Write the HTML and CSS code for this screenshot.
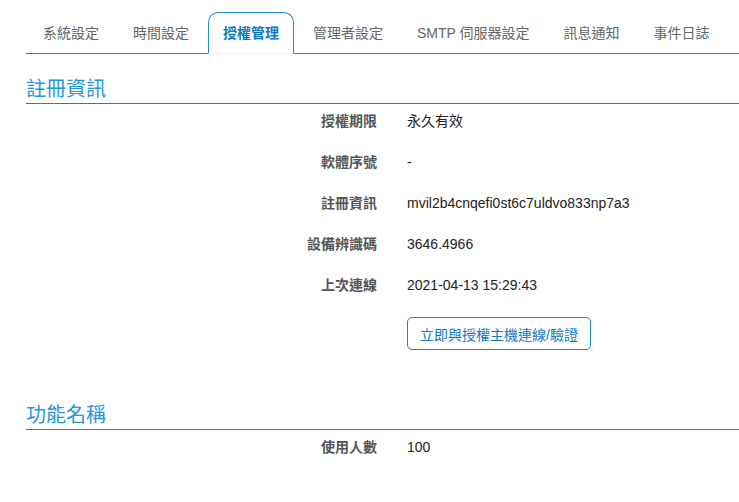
FILE: index.html
```html
<!doctype html>
<html lang="zh-Hant">

<head>
    <meta charset="utf-8">
    <meta name="viewport" content="width=device-width, initial-scale=1">
    <title>授權管理</title>

    <link rel="stylesheet" href="styles.css">

</head>

<body>
    <div class="page">
        <ul class="tabs">
            <li class="tab">系統設定</li>
            <li class="tab">時間設定</li>
            <li class="tab active">授權管理</li>
            <li class="tab">管理者設定</li>
            <li class="tab">SMTP 伺服器設定</li>
            <li class="tab">訊息通知</li>
            <li class="tab">事件日誌</li>
        </ul>

        <h2 class="section-title first">註冊資訊</h2>
        <div class="row">
            <div class="label">授權期限</div>
            <div class="value">永久有效</div>
        </div>
        <div class="row">
            <div class="label">軟體序號</div>
            <div class="value">-</div>
        </div>
        <div class="row">
            <div class="label">註冊資訊</div>
            <div class="value">mvil2b4cnqefi0st6c7uldvo833np7a3</div>
        </div>
        <div class="row">
            <div class="label">設備辨識碼</div>
            <div class="value">3646.4966</div>
        </div>
        <div class="row">
            <div class="label">上次連線</div>
            <div class="value">2021-04-13 15:29:43</div>
        </div>
        <div class="actions">
            <button class="btn">立即與授權主機連線/驗證</button>
        </div>

        <h2 class="section-title second">功能名稱</h2>
        <div class="row">
            <div class="label">使用人數</div>
            <div class="value">100</div>
        </div>
    </div>
</body>

</html>
```

FILE: styles.css
```css
body {
    margin: 0;
    background-color: #fff;
    color: #333;
    font-family: "Liberation Sans", Arial, "Noto Sans CJK TC", sans-serif;
    font-size: 14px;
}

.page {
    padding: 12px 0 0 26px;
}

.tabs {
    display: flex;
    margin: 0;
    padding: 0;
    list-style: none;
    border-bottom: 1px solid #1b7fc4;
}

.tab {
    margin: 0 2px -1px;
    padding: 0 14px;
    line-height: 40px;
    color: #666;
    border: 1px solid transparent;
    border-bottom: 1px solid #1b7fc4;
    border-radius: 10px 10px 0 0;
}

.tab.active {
    color: #0b78c4;
    font-weight: bold;
    border-color: #1b8ad0;
    border-bottom-color: #e6f1fa;
    background-color: #fff;
}

.section-title {
    margin: 0;
    padding-bottom: 2px;
    font-size: 20px;
    line-height: 24px;
    font-weight: normal;
    color: #2595dc;
    border-bottom: 1px solid #1b7fc4;
}

.section-title.first {
    margin-top: 23px;
}

.section-title.second {
    margin-top: 53px;
}

.row {
    display: flex;
    padding: 7px 0 14px;
    line-height: 20px;
}

.label {
    width: 351px;
    padding-right: 30px;
    text-align: right;
    font-weight: bold;
    color: #555;
}

.value {
    color: #222;
}

.actions {
    padding: 8px 0 0 381px;
}

.btn {
    height: 33px;
    padding: 0 12px;
    font-family: inherit;
    font-size: 14px;
    color: #0b78c4;
    background-color: #fff;
    border: 1px solid #1b7fc4;
    border-radius: 5px;
}
```
